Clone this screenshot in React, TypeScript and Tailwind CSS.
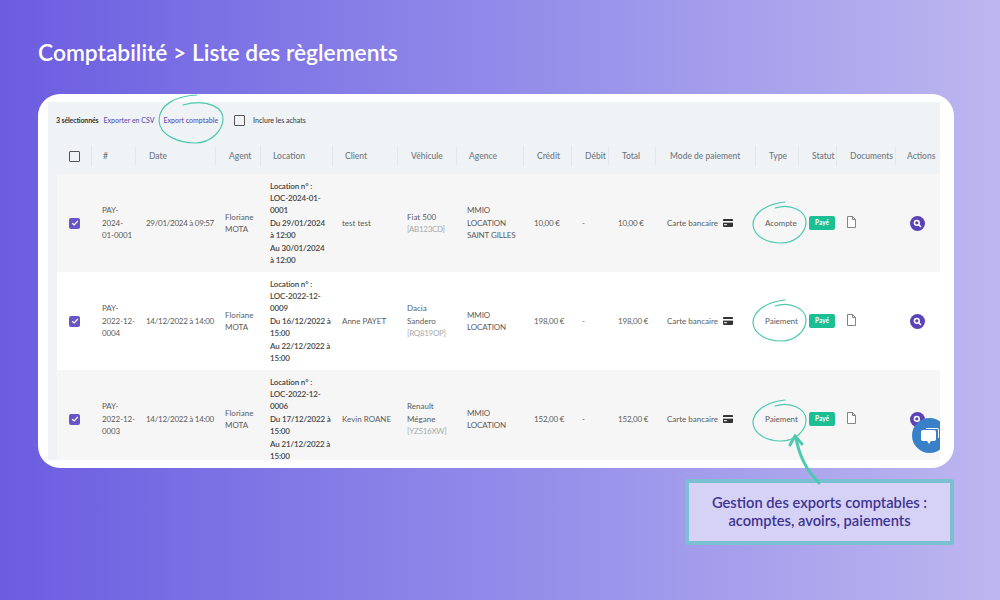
import React from 'react'

const gridCols =
  'grid grid-cols-[34px_44px_80px_45px_72px_65px_59px_67px_48px_37px_47px_100px_43px_38px_59px_45px]'

const headers = [
  { label: '#', pl: 'pl-[11px]' },
  { label: 'Date', pl: 'pl-[13px]' },
  { label: 'Agent', pl: 'pl-[13px]' },
  { label: 'Location', pl: 'pl-[12px]' },
  { label: 'Client', pl: 'pl-[12px]' },
  { label: 'Véhicule', pl: 'pl-[13px]' },
  { label: 'Agence', pl: 'pl-[12px]' },
  { label: 'Crédit', pl: 'pl-[13px]' },
  { label: 'Débit', pl: 'pl-[13px]' },
  { label: 'Total', pl: 'pl-[13px]' },
  { label: 'Mode de paiement', pl: 'pl-[14px]' },
  { label: 'Type', pl: 'pl-[13px]' },
  { label: 'Statut', pl: 'pl-[13px]' },
  { label: 'Documents', pl: 'pl-[13px]' },
  { label: 'Actions', pl: 'pl-[11px]' },
]

const rows = [
  {
    id: ['PAY-', '2024-', '01-0001'],
    date: '29/01/2024 à 09:57',
    location: ['Location n° :', 'LOC-2024-01-', '0001', 'Du 29/01/2024', 'à 12:00', 'Au 30/01/2024', 'à 12:00'],
    client: 'test test',
    car: ['Fiat 500'],
    plate: '[AB123CD]',
    agency: ['MMIO', 'LOCATION', 'SAINT GILLES'],
    amount: '10,00 €',
    type: 'Acompte',
    bg: 'bg-[#f6f6f6]',
  },
  {
    id: ['PAY-', '2022-12-', '0004'],
    date: '14/12/2022 à 14:00',
    location: ['Location n° :', 'LOC-2022-12-', '0009', 'Du 16/12/2022 à', '15:00', 'Au 22/12/2022 à', '15:00'],
    client: 'Anne PAYET',
    car: ['Dacia', 'Sandero'],
    plate: '[RQ819OP]',
    agency: ['MMIO', 'LOCATION'],
    amount: '198,00 €',
    type: 'Paiement',
    bg: 'bg-white',
  },
  {
    id: ['PAY-', '2022-12-', '0003'],
    date: '14/12/2022 à 14:00',
    location: ['Location n° :', 'LOC-2022-12-', '0006', 'Du 17/12/2022 à', '15:00', 'Au 21/12/2022 à', '15:00'],
    client: 'Kevin ROANE',
    car: ['Renault', 'Mégane'],
    plate: '[YZ516XW]',
    agency: ['MMIO', 'LOCATION'],
    amount: '152,00 €',
    type: 'Paiement',
    bg: 'bg-[#f6f6f6]',
  },
]

const Lines = ({ items, className = '' }: { items: string[]; className?: string }) => (
  <div className={className}>
    {items.map((line, i) => (
      <div key={i}>{line}</div>
    ))}
  </div>
)

const Check = ({ on }: { on?: boolean }) =>
  on ? (
    <span className="flex h-[11px] w-[11px] items-center justify-center rounded-[2px] bg-[#6a55c8]">
      <svg width="8" height="8" viewBox="0 0 8 8" fill="none">
        <path d="M1.2 4.2 3.2 6 6.8 2" stroke="#fff" strokeWidth="1.2" />
      </svg>
    </span>
  ) : (
    <span className="block h-[11px] w-[11px] rounded-[1px] border border-[#555]" />
  )

const CardIcon = () => (
  <svg width="10" height="8" viewBox="0 0 10 8" className="ml-[5px]">
    <rect width="10" height="8" rx="1" fill="#333" />
    <rect y="2" width="10" height="1.6" fill="#fff" />
    <rect x="1" y="5.2" width="3" height="1" fill="#fff" />
  </svg>
)

const DocIcon = () => (
  <svg width="9" height="12" viewBox="0 0 9 12" fill="#fff" stroke="#666" strokeWidth="0.8">
    <path d="M.5.5h5l3 3v8h-8z" />
    <path d="M5.5.5v3h3" fill="none" />
  </svg>
)

const SearchButton = () => (
  <span className="flex h-[15px] w-[15px] items-center justify-center rounded-full bg-[#5a43b8]">
    <svg width="9" height="9" viewBox="0 0 9 9" fill="none" stroke="#fff" strokeWidth="1.5">
      <circle cx="3.8" cy="3.8" r="2.4" />
      <path d="M5.6 5.6 8 8" />
    </svg>
  </span>
)

const Row = ({ row }: { row: (typeof rows)[number] }) => (
  <div className={`${gridCols} ${row.bg} h-[98px] shrink-0 items-center text-[8px] leading-[12.4px] text-[#5c5c5c]`}>
    <div className="flex justify-center pl-[1px]">
      <Check on />
    </div>
    <Lines items={row.id} className="whitespace-nowrap pl-[11px] tracking-[-0.1px]" />
    <div className="whitespace-nowrap pl-[11px] tracking-[-0.28px]">{row.date}</div>
    <Lines items={['Floriane', 'MOTA']} className="pl-[10px]" />
    <Lines
      items={row.location}
      className="whitespace-nowrap pl-[10px] font-semibold tracking-[-0.15px] text-[#444]"
    />
    <div className="whitespace-nowrap pl-[10px]">{row.client}</div>
    <div className="whitespace-nowrap pl-[10px]">
      <Lines items={row.car} />
      <div className="tracking-[-0.3px] text-[#aaa]">{row.plate}</div>
    </div>
    <Lines items={row.agency} className="whitespace-nowrap pl-[11px] tracking-[-0.1px]" />
    <div className="whitespace-nowrap pl-[11px] tracking-[-0.2px]">{row.amount}</div>
    <div className="pl-[11px]">-</div>
    <div className="whitespace-nowrap pl-[10px] tracking-[-0.2px]">{row.amount}</div>
    <div className="flex items-center whitespace-nowrap pl-[12px]">
      Carte bancaire
      <CardIcon />
    </div>
    <div className="whitespace-nowrap pl-[10px]">{row.type}</div>
    <div className="pl-[11px]">
      <span className="flex h-[14px] w-[26px] items-center justify-center rounded-[2px] bg-[#1cbf94] text-[6.5px] font-bold text-white">
        Payé
      </span>
    </div>
    <div className="pb-[3px] pl-[11px]">
      <DocIcon />
    </div>
    <div className="pl-[15px]">
      <SearchButton />
    </div>
  </div>
)

const Loop = ({ dy }: { dy: number }) => (
  <path
    transform={`translate(0 ${dy})`}
    d="M785 202C766 204 753 213 753 225C754 237 768 243 781 243C796 243 806 232 806 222C806 211 791 203 775 208"
  />
)

export default function App() {
  return (
    <div className="relative flex h-[600px] w-[1000px] flex-col overflow-hidden bg-gradient-to-r from-[#6c5ce0] to-[#bdb6ef] font-['Lato',sans-serif]">
      <h1 className="ml-[38px] mt-[39px] h-[26px] whitespace-nowrap text-[22.8px] font-semibold leading-[26px] text-white">
        Comptabilité &gt; Liste des règlements
      </h1>

      <div className="ml-[38px] mt-[29px] h-[374px] w-[916px] shrink-0 rounded-[22px] bg-white pb-[8px] pl-[10px] pr-[14px] pt-[8px]">
        <div className="relative flex h-full flex-col overflow-hidden bg-[#f0f3f6] pl-[9px]">
          <div className="-ml-[1px] flex h-[36px] shrink-0 items-center whitespace-nowrap text-[7px]">
            <span className="font-bold tracking-[-0.15px] text-[#333]">3 sélectionnés</span>
            <span className="ml-[5px] font-medium text-[#5b4fb0]">Exporter en CSV</span>
            <span className="ml-[9px] font-medium text-[#5b4fb0]">Export comptable</span>
            <span className="ml-[16px] mr-[8px]">
              <Check />
            </span>
            <span className="font-medium text-[#444]">Inclure les achats</span>
          </div>

          <div className={`${gridCols} h-[36px] shrink-0 items-center text-[8.5px] font-medium text-[#6f7680]`}>
            <div className="flex justify-center pl-[1px]">
              <Check />
            </div>
            {headers.map((h) => (
              <div
                key={h.label}
                className={`flex h-[20px] items-center whitespace-nowrap border-l border-[#e4e7eb] ${h.pl}`}
              >
                {h.label}
              </div>
            ))}
          </div>

          {rows.map((row) => (
            <Row key={row.id.join('')} row={row} />
          ))}

          <span className="absolute left-[864px] top-[316px] flex h-[35px] w-[35px] items-center justify-center rounded-full bg-[#3a80c8]">
            <svg width="20" height="20" viewBox="0 0 20 20" fill="#fff">
              <path d="M6 2h11a2 2 0 0 1 2 2v8h-1V4a1 1 0 0 0-1-1H6z" />
              <path d="M3 4h11a2 2 0 0 1 2 2v7a2 2 0 0 1-2 2h-3l-2 3-2-3H3a2 2 0 0 1-2-2V6a2 2 0 0 1 2-2z" />
            </svg>
          </span>
        </div>
      </div>

      <div className="ml-[685px] mt-[11px] flex h-[66px] w-[269px] shrink-0 items-center justify-center rounded-[3px] border-[4px] border-[#78c0d2] bg-[#d6d2f6] pb-[3px] text-center text-[14.7px] font-semibold leading-[18px] text-[#3f3490]">
        <div>
          Gestion des exports comptables :
          <br />
          acomptes, avoirs, paiements
        </div>
      </div>

      {/* hand drawn annotations over the screenshot */}
      <svg
        className="pointer-events-none absolute left-0 top-0"
        width="1000"
        height="600"
        viewBox="0 0 1000 600"
        fill="none"
        stroke="#4cc9b0"
        strokeWidth="1.2"
        strokeLinecap="round"
      >
        <path d="M197 95C175 96 159 105 159 121C160 136 180 143 195 143C212 143 222 130 223 120C224 108 208 98 183 105" />
        <Loop dy={0} />
        <Loop dy={98} />
        <Loop dy={198} />
        <path d="M819 483C806 470 799 455 796 438" strokeWidth="3" />
        <path d="M790 445 795 436 802 444" strokeWidth="3" />
      </svg>
    </div>
  )
}
